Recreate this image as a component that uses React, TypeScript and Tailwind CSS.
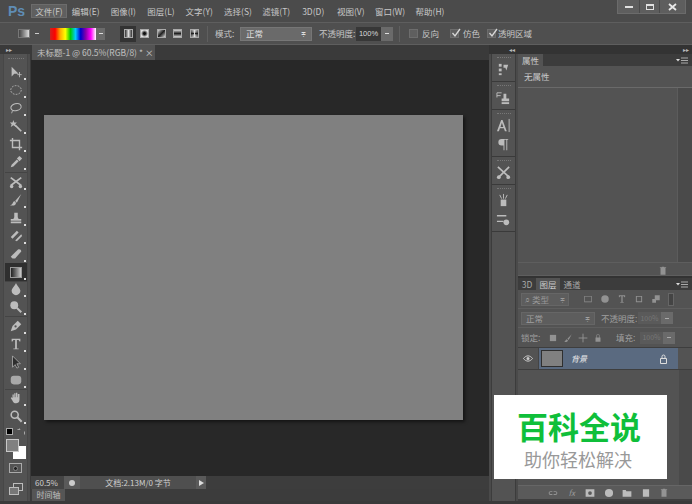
import React from "react";

type IP = { children: React.ReactNode; s?: number; className?: string };
function Ic({ children, s = 16, className = "" }: IP) {
  return (
    <svg width={s} height={s} viewBox="0 0 16 16" fill="#bcbcbc" stroke="none" className={className}>
      {children}
    </svg>
  );
}

const toolIcons: React.ReactNode[][] = [
  [
    <path key="a" d="M3 2v11l3-3h5z" />,
    <path key="b" d="M12 8v6M9.5 11h5" stroke="#bcbcbc" strokeWidth="1" />,
  ],
  [<ellipse key="a" cx="8" cy="8" rx="6" ry="5" fill="none" stroke="#bcbcbc" strokeDasharray="2 1.4" />],
  [<ellipse key="a" cx="8" cy="7" rx="6" ry="4" fill="none" stroke="#bcbcbc" strokeWidth="1.2" transform="rotate(-15 8 7)" />, <path key="b" d="M4 11l-1 3" stroke="#bcbcbc" />],
  [<path key="a" d="M7 7l7 7" stroke="#bcbcbc" strokeWidth="2" />, <path key="b" d="M5 1l1 3 3 0-2 2 1 3-3-2-3 2 1-3-2-2 3 0z" />],
  [<path key="a" d="M4 1v11h11M1 4h11v11" fill="none" stroke="#bcbcbc" strokeWidth="1.6" />],
  [<path key="a" d="M2 14l1-3 6-6 2 2-6 6z" />, <path key="b" d="M9 4l2-2 1-1 3 3-3 3z" />],
  [<path key="a" d="M2 3l12 9M14 3L2 12" stroke="#bcbcbc" strokeWidth="2" />, <circle key="b" cx="3" cy="13" r="2" />, <circle key="c" cx="13" cy="13" r="2" />],
  [<path key="a" d="M14 1L7 9l2 2z" />, <path key="b" d="M6 9c-2 1-1 4-5 5 4 1 7 0 7-3z" />],
  [<path key="a" d="M6 2h4v5l1 2h3v2H2V9h3l1-2z" />, <rect key="b" x="2" y="12" width="12" height="2" />],
  [<path key="a" d="M2 9l7-7 2 2-7 7z" />, <path key="b" d="M7 13l7-7 1 2-6 6z" />],
  [<path key="a" d="M2 11l8-8c2-1 4 0 4 2l-7 8H4z" />],
  [],
  [<path key="a" d="M8 1c1 3 5 6 5 9a5 5 0 0 1-10 0c0-3 4-6 5-9z" />],
  [<circle key="a" cx="6" cy="6" r="4.5" />, <path key="b" d="M9 9l5 5" stroke="#bcbcbc" strokeWidth="2.4" />],
  [<path key="a" d="M2 14l2-6 6-6 4 4-6 6z" />, <circle key="b" cx="7.5" cy="8.5" r="1.3" fill="#555" />],
  [<path key="a" d="M3 2h10v3h-1l-1-1.5H9V13h2v1H5v-1h2V3.5H5L4 5H3z" />],
  [<path key="a" d="M4 1v13l3-3 2 4 2-1-2-4h4z" fill="#2e2e2e" stroke="#bcbcbc" strokeWidth="0.8" />],
  [<rect key="a" x="2" y="3" width="12" height="10" rx="3.5" fill="#a8a8a8" />],
  [<path key="a" d="M4 8V4h1.5v3h.5V2.5h1.5V7h.5V2h1.5v5h.5V3.5H12V10c0 3-2 4-4 4s-3-1-4-3L2 8l1-1z" />],
  [<circle key="a" cx="6.5" cy="6.5" r="4" fill="none" stroke="#bcbcbc" strokeWidth="1.8" />, <path key="b" d="M9.5 9.5l5 5" stroke="#bcbcbc" strokeWidth="2.4" />],
];

const groups = [
  { from: 0, to: 6, cls: "pb-[1px] border-b border-[#444] pt-[1px]" },
  { from: 6, to: 12, cls: "border-b border-[#444] -mb-[2px]" },
  { from: 12, to: 14, cls: "border-b border-[#444]" },
  { from: 14, to: 18, cls: "border-b border-[#444]" },
  { from: 18, to: 20, cls: "-mt-[1px]" },
];

function Tool({ icon, active }: { icon: React.ReactNode; active?: boolean }) {
  return (
    <div className={`relative w-[22px] h-[18px] flex items-center justify-center ${active ? "bg-[#2f2f2f]" : ""}`}>
      {active ? (
        <div className="w-[12px] h-[11px] bg-gradient-to-r from-[#222] to-[#ccc] border border-[#999]" />
      ) : (
        <Ic s={14}>{icon}</Ic>
      )}
      <span className="absolute right-[1px] bottom-[1px] w-[2px] h-[2px] bg-[#ddd]" />
    </div>
  );
}

function Tools() {
  return (
    <div className="w-[31px] flex flex-col border-r border-[#3a3a3a] bg-[#4d4d4d]">
      <div className="h-[9px] bg-[#3a3a3a] text-[6px] leading-[9px] text-[#bbb] pl-[6px]">▸▸</div>
      <div className="ml-[3px] w-[25px] flex flex-col items-center flex-1 bg-[#535353] border-x border-[#474747]">
        <div className="h-[8px] flex items-center"><div className="w-[16px] border-t border-dotted border-[#777]" /></div>
        {groups.map((g, i) => (
          <div key={i} className={`flex flex-col items-center ${g.cls}`}>
            {toolIcons.slice(g.from, g.to).map((ic, j) => (
              <Tool key={j} icon={ic} active={g.from + j === 11} />
            ))}
          </div>
        ))}
        <div className="h-[9px] w-full flex items-center justify-between px-[2px] mt-[2px]">
          <div className="w-[7px] h-[7px] bg-black border border-[#aaa]" />
          <Ic s={8}><path d="M1 3h5l-1-2M15 13v-6" stroke="#bcbcbc" strokeWidth="1.6" fill="none" /></Ic>
        </div>
        <div className="relative w-[20px] h-[20px] mt-[3px]">
          <div className="absolute left-[7px] top-[7px] w-[13px] h-[13px] bg-white" />
          <div className="absolute left-0 top-0 w-[13px] h-[13px] bg-[#808080] border border-[#c8c8c8]" />
        </div>
        <div className="w-[13px] h-[10px] border border-[#aaa] mt-[4px] flex items-center justify-center">
          <div className="w-[5px] h-[5px] rounded-full bg-[#222] border border-[#888]" />
        </div>
        <div className="relative w-[14px] h-[12px] mt-[10px]">
          <div className="absolute right-0 top-0 w-[10px] h-[8px] border border-[#bcbcbc]" />
          <div className="absolute left-0 bottom-0 w-[10px] h-[8px] border border-[#bcbcbc] bg-[#777]" />
        </div>
      </div>
    </div>
  );
}

const menu = [
  { t: "文件(F)", w: "w-[36px]" },
  { t: "编辑(E)", w: "w-[37.5px]" },
  { t: "图像(I)", w: "w-[37.5px]" },
  { t: "图层(L)", w: "w-[38px]" },
  { t: "文字(Y)", w: "w-[38.5px]" },
  { t: "选择(S)", w: "w-[39px]" },
  { t: "滤镜(T)", w: "w-[37.5px]" },
  { t: "3D(D)", w: "w-[36.5px]" },
  { t: "视图(V)", w: "w-[38.5px]" },
  { t: "窗口(W)", w: "w-[40px]" },
  { t: "帮助(H)", w: "w-[40px]" },
];

function MenuBar() {
  return (
    <div className="h-[22px] flex items-center bg-[#4b4b4b] relative shrink-0">
      <div className="w-[31px] pl-[8px] text-[14px] font-bold text-[#5f8db5] font-['Liberation_Sans',sans-serif]">Ps</div>
      {menu.map((m, i) => (
        <div key={m.t} className={`h-[14px] ${m.w} flex items-center justify-center text-[8.5px] whitespace-nowrap text-[#c8c8c8] ${i === 0 ? "bg-[#5f5f5f] border border-[#6c6c6c]" : ""}`}>
          {m.t}
        </div>
      ))}
      <div className="absolute right-[6px] top-0 h-[14px] w-[69px] flex bg-[#5e5e5e] border border-[#6b6b6b] border-t-0">
        <div className="w-[22px] flex items-center justify-center border-r border-[#4a4a4a]"><div className="w-[8px] h-[2px] bg-[#e0e0e0]" /></div>
        <div className="w-[20px] flex items-center justify-center border-r border-[#4a4a4a]"><div className="w-[8px] h-[6px] border border-t-2 border-[#e0e0e0]" /></div>
        <div className="flex-1 flex items-center justify-center">
          <svg width="9" height="8" viewBox="0 0 9 8"><path d="M1 1l7 6M8 1L1 7" stroke="#e8e8e8" strokeWidth="1.8" /></svg>
        </div>
      </div>
    </div>
  );
}

function Check({ on }: { on?: boolean }) {
  return (
    <div className="w-[9px] h-[9px] bg-[#5f5f5f] border border-[#6d6d6d] relative">
      {on && (
        <svg width="11" height="10" viewBox="0 0 11 10" className="absolute left-0 -top-[2px]">
          <path d="M1.5 5l2.5 3 5-7" stroke="#d8d8d8" strokeWidth="1.3" fill="none" />
        </svg>
      )}
    </div>
  );
}

function Sep() {
  return <div className="w-px h-[16px] bg-[#3f3f3f] border-r border-[#5f5f5f]" />;
}

function GradStyle({ kind, active }: { kind: string; active?: boolean }) {
  const inner: Record<string, string> = {
    a: "bg-gradient-to-r from-[#333] via-[#ddd] to-[#333]",
    b: "bg-[radial-gradient(circle,#111_20%,#ddd_70%)]",
    c: "bg-gradient-to-br from-[#ddd] via-[#222] to-[#ddd]",
    d: "bg-gradient-to-b from-[#ddd] via-[#222] to-[#ddd]",
    e: "bg-[conic-gradient(#ddd,#222,#ddd,#222,#ddd)]",
  };
  return (
    <div className={`w-[16px] h-[16px] flex items-center justify-center ${active ? "bg-[#333]" : ""}`}>
      <div className={`w-[9px] h-[9px] border border-[#aaa] ${inner[kind]}`} />
    </div>
  );
}

function OptionsBar() {
  return (
    <div className="h-[23px] shrink-0 flex items-center bg-[#4f4f4f] border-y border-[#5e5e5e] text-[8.5px] text-[#c8c8c8] whitespace-nowrap">
      <div className="ml-[18px] w-[12px] h-[9px] bg-gradient-to-r from-[#444] to-[#ddd] border border-[#777]" />
      <div className="ml-[5px] w-[4px] h-[1px] bg-[#ccc]" />
      <div className="ml-[11px] w-[46px] h-[12px] bg-[linear-gradient(90deg,#c22,#f00,#fa0,#ff0,#0c0,#0cf,#00c,#80a,#f0f,#fff)]" />
      <div className="w-[9px] h-[12px] bg-[#6a6a6a] flex items-center justify-center"><div className="w-[4px] h-[1px] bg-[#ddd]" /></div>
      <div className="ml-[15px] flex gap-[0.5px]">
        <GradStyle kind="a" active />
        <GradStyle kind="b" />
        <GradStyle kind="c" />
        <GradStyle kind="d" />
        <GradStyle kind="e" />
      </div>
      <div className="ml-[5px]"><Sep /></div>
      <span className="ml-[7px] w-[25px]">模式:</span>
      <div className="w-[72px] h-[14px] bg-[#6a6a6a] border border-[#767676] flex items-center justify-between px-[5px] text-[#e0e0e0]">
        <span>正常</span><span className="text-[6px]">≑</span>
      </div>
      <span className="ml-[7px] w-[37px]">不透明度:</span>
      <div className="w-[25px] h-[14px] bg-[#373737] flex items-center justify-center text-[7.5px] text-[#d8d8d8] font-['Liberation_Sans',sans-serif]">100%</div>
      <div className="w-[12px] h-[14px] bg-[#6a6a6a] flex items-center justify-center"><div className="w-[4px] h-[1px] bg-[#ddd]" /></div>
      <div className="ml-[6px]"><Sep /></div>
      <div className="ml-[9px]"><Check /></div>
      <span className="ml-[4px] w-[28px] text-[8.5px]">反向</span>
      <Check on />
      <span className="ml-[2px] w-[25px] pl-[2px]">仿色</span>
      <div className="ml-[1px]"><Check on /></div>
      <span className="ml-[2px]">透明区域</span>
    </div>
  );
}

function Center() {
  return (
    <div className="flex-1 flex flex-col min-w-0">
      <div className="h-[15px] flex bg-[#3a3a3a] shrink-0">
        <div className="ml-[1px] w-[123px] h-full bg-[#535353] flex items-center pl-[5px] text-[8.5px] text-[#c0c0c0] whitespace-nowrap">
          未标题-1 @ 60.5%(RGB/8) *<span className="ml-[2px]">×</span>
        </div>
      </div>
      <div className="flex-1 bg-[#282828] pl-[13px] pt-[55px] min-h-0">
        <div className="w-[419px] h-[305px] bg-[#808080] shadow-[2px_2px_3px_rgba(0,0,0,0.5)]" />
      </div>
      <div className="h-[13px] shrink-0 flex items-center bg-[#3d3d3d] text-[8px] text-[#cfcfcf]">
        <div className="w-[33px] h-full flex items-center pl-[4px] bg-[#444]">60.5%</div>
        <div className="w-[16px] h-full bg-[#5a5a5a] flex items-center justify-center"><div className="w-[6px] h-[6px] rounded-full bg-[#ccc]" /></div>
        <div className="w-[116px] h-full bg-[#4f4f4f] flex items-center justify-center whitespace-nowrap">文档:2.13M/0 字节</div>
        <div className="w-[10px] h-full bg-[#5a5a5a] flex items-center justify-center">
          <div className="w-0 h-0 border-y-[3px] border-y-transparent border-l-[5px] border-l-[#ddd]" />
        </div>
      </div>
      <div className="h-[12px] shrink-0 flex bg-[#3c3c3c]">
        <div className="ml-[1px] w-[33px] h-full bg-[#555] flex items-center justify-center text-[8px] text-[#c0c0c0]">时间轴</div>
      </div>
    </div>
  );
}

function Dock() {
  const grp: React.ReactNode[][] = [
    [<g key="a"><rect x="3" y="2" width="3" height="3" /><rect x="3" y="7" width="3" height="3" /><rect x="3" y="12" width="3" height="2" /><path d="M8 3h5l-2 6-1-3H8z" /></g>],
    [<g key="a"><path d="M1 3h5M1 6h4M1 3v5" stroke="#bcbcbc" fill="none" /><path d="M8 4h3v5h3v3H6V9h2z" /><rect x="6" y="13" width="8" height="2" /></g>],
    [
      <g key="a"><path d="M1 14L5.5 2h1.5L11.5 14H9.5L8.4 11H4.2L3.1 14zM4.8 9.5h3L6.3 5z" /><rect x="13.5" y="1" width="1" height="14" /></g>,
      <g key="b"><path d="M6 2h7v1h-1v11h-1V3H9v11H8V9H6a3.5 3.5 0 0 1 0-7z" /></g>,
    ],
    [<g key="a"><path d="M2 2l12 11M14 2L3 13" stroke="#bcbcbc" strokeWidth="1.8" /><circle cx="3" cy="13" r="2" /><circle cx="13" cy="13" r="2" /></g>],
    [
      <g key="a"><path d="M5 7h6v7H5z" /><path d="M6 6L4 2M8 6V1M10 6l2-4" stroke="#bcbcbc" /></g>,
      <g key="b"><path d="M1 4h10M1 10h7" stroke="#bcbcbc" strokeWidth="1.5" /><circle cx="11" cy="11" r="3" /></g>,
    ],
  ];
  return (
    <div className="w-[29px] flex flex-col shrink-0 bg-[#4a4a4a]">
      <div className="h-[9px] bg-[#333] text-[6px] leading-[9px] text-right pr-[3px] text-[#bbb]">◂◂</div>
      <div className="ml-[2px] w-[25px] flex-1 flex flex-col border-x border-[#3c3c3c] bg-[#535353]">
        {grp.map((g, i) => (
          <div key={i} className="flex flex-col items-center border-b border-[#3a3a3a] pt-[3px] pb-[4px] gap-[4px]">
            <div className="w-[14px] border-t border-dotted border-[#777]" />
            {g.map((ic, j) => (
              <Ic key={j} s={15}>{ic}</Ic>
            ))}
          </div>
        ))}
      </div>
    </div>
  );
}

function Dash() {
  return <div className="w-[12px] h-[12px] bg-[#6a6a6a] flex items-center justify-center"><div className="w-[4px] h-[1px] bg-[#aaa]" /></div>;
}

function Small({ children }: { children: React.ReactNode }) {
  return <Ic s={10} className="opacity-60">{children}</Ic>;
}

function MenuIcon() {
  return (
    <svg width="12" height="7" viewBox="0 0 12 7" className="mr-[2px]">
      <path d="M0 2h4L2 4.5z" fill="#ddd" /><path d="M5 1h7M5 3.5h7M5 6h7" stroke="#aaa" />
    </svg>
  );
}

function Cell({ children }: { children: React.ReactNode }) {
  return <div className="w-[18.5px] flex items-center justify-center">{children}</div>;
}

function Panels() {
  return (
    <div className="w-[174px] flex flex-col shrink-0 text-[8.5px] text-[#c8c8c8] bg-[#3f3f3f] whitespace-nowrap">
      <div className="h-[9px] bg-[#333] text-[6px] leading-[9px] text-right pr-[3px] text-[#bbb]">▸▸</div>
      <div className="h-[12px] flex items-stretch justify-between bg-[#3c3c3c] pr-[2px]">
        <div className="w-[25px] bg-[#535353] flex items-center justify-center">属性</div>
        <div className="flex items-center"><MenuIcon /></div>
      </div>
      <div className="h-[22px] bg-[#535353] border-b border-[#6a6a6a] flex items-center pl-[6px]">无属性</div>
      <div className="h-[174px] flex">
        <div className="w-[160px] bg-[#535353] border-r border-[#5c5c5c]" />
        <div className="flex-1 bg-[#4a4a4a]" />
      </div>
      <div className="h-[14px] bg-[#535353] border-y border-[#5e5e5e] flex items-center justify-end pr-[24px] pt-[3px]">
        <Small><path d="M4 3h8v11H4zM3 2h10v1H3zM6 1h4v1H6z" /></Small>
      </div>
      <div className="h-[2px] bg-[#333]" />
      <div className="h-[12px] flex items-stretch justify-between bg-[#3c3c3c] pr-[2px]">
        <div className="flex">
          <div className="w-[18px] flex items-center justify-center text-[#a8a8a8]">3D</div>
          <div className="w-[24px] bg-[#535353] flex items-center justify-center">图层</div>
          <div className="w-[24px] flex items-center justify-center text-[#a8a8a8]">通道</div>
        </div>
        <div className="flex items-center"><MenuIcon /></div>
      </div>
      <div className="flex-1 flex flex-col bg-[#535353] min-h-0">
        <div className="h-[19px] flex items-center border-b border-[#5e5e5e] pl-[3px] text-[#999]">
          <div className="w-[48px] h-[13px] bg-[#5d5d5d] border border-[#666] flex items-center justify-between px-[3px]">
            <span>⌕ 类型</span><span className="text-[6px]">≑</span>
          </div>
          <div className="flex ml-[14px] gap-[7px] items-center">
            <Small><path d="M2 3h12v10H2zM3 4v8h10V4z" /></Small>
            <Small><circle cx="8" cy="8" r="6" /></Small>
            <Small><path d="M3 2h10v3h-1l-1-1.5H9V13h2v1H5v-1h2V3.5H5L4 5H3z" /></Small>
            <Small><path d="M3 3h10v10H3zM4.5 4.5v7h7v-7z" /></Small>
            <Small><path d="M6 2h8v8H6zM2 8h6v6H2z" /></Small>
          </div>
          <div className="ml-[7px] w-[6px] h-[13px] bg-[#444] border border-[#666]" />
        </div>
        <div className="h-[19px] flex items-center border-b border-[#5e5e5e] pl-[3px] text-[#a0a0a0]">
          <div className="w-[74px] h-[13px] bg-[#5d5d5d] border border-[#666] flex items-center justify-between px-[4px]">
            <span>正常</span><span className="text-[6px]">≑</span>
          </div>
          <span className="ml-[6px] w-[37px]">不透明度:</span>
          <div className="w-[23px] h-[12px] bg-[#5a5a5a] text-[7px] text-[#777] flex items-center justify-center">100%</div>
          <Dash />
        </div>
        <div className="h-[20px] flex items-center border-b border-[#3e3e3e] pl-[3px] text-[#a0a0a0]">
          <span className="w-[27px]">锁定:</span>
          <div className="flex gap-[5px] items-center">
            <Small><path d="M3 3h10v10H3z" /></Small>
            <Small><path d="M14 2L7 9l2 2zM6 10c-2 1-2 3-4 4 3 1 6 0 6-2z" /></Small>
            <Small><path d="M8 1v14M1 8h14" stroke="#bcbcbc" strokeWidth="1.5" /></Small>
            <Small><path d="M4 7h8v7H4zM5.5 7V4a2.5 2.5 0 0 1 5 0v3h-1V4a1.5 1.5 0 0 0-3 0v3z" /></Small>
          </div>
          <span className="ml-[13px] w-[24px]">填充:</span>
          <div className="w-[23px] h-[12px] bg-[#5a5a5a] text-[7px] text-[#777] flex items-center justify-center">100%</div>
          <Dash />
        </div>
        <div className="h-[22px] flex items-center border-b border-[#3e3e3e]">
          <div className="w-[21px] h-full flex items-center justify-center border-r border-[#444]">
            <svg width="10" height="7" viewBox="0 0 10 7"><path d="M0.5 3.5C3 0 7 0 9.5 3.5 7 7 3 7 0.5 3.5z" fill="none" stroke="#ccc" /><circle cx="5" cy="3.5" r="1.5" fill="#ccc" /></svg>
          </div>
          <div className="w-[139px] h-full bg-[#5a6a80] flex items-center pl-[2px]">
            <div className="w-[22px] h-[17px] bg-[#808080] border border-[#2f2f2f]" />
            <span className="ml-[8px] italic text-[8px] text-[#eee]">背景</span>
            <svg width="9" height="10" viewBox="0 0 9 10" className="ml-[72px]"><path d="M1.5 4.5h6v5h-6zM3 4.5V2.5a1.5 1.5 0 0 1 3 0v2" fill="none" stroke="#ddd" /></svg>
          </div>
        </div>
        <div className="flex-1 flex">
          <div className="w-[161px]" />
          <div className="flex-1 bg-[#4a4a4a]" />
        </div>
        <div className="h-[14px] shrink-0 bg-[#5a5a5a] border-t border-[#666] flex items-center pl-[26px]">
          <Cell><Small><path d="M1 8a3 3 0 0 1 3-3h3v1.5H4a1.5 1.5 0 0 0 0 3h3V11H4a3 3 0 0 1-3-3zM9 5h3a3 3 0 0 1 0 6H9V9.5h3a1.5 1.5 0 0 0 0-3H9z" /></Small></Cell>
          <Cell><span className="italic text-[8px] text-[#999]">fx</span></Cell>
          <Cell><Ic s={10}><path fillRule="evenodd" d="M1 2h14v12H1zM8 5a3 3 0 1 0 0 6 3 3 0 0 0 0-6z" /></Ic></Cell>
          <Cell><Ic s={10}><circle cx="8" cy="8" r="6.5" /></Ic></Cell>
          <Cell><Ic s={10}><path d="M1 3h5l1 2h8v9H1z" /></Ic></Cell>
          <Cell><Ic s={10}><path d="M3 2h10v12H3z" /></Ic></Cell>
          <Cell><Small><path d="M4 3h8v11H4zM3 2h10v1H3zM6 1h4v1H6z" /></Small></Cell>
        </div>
      </div>
      <div className="h-[2px]" />
    </div>
  );
}

export default function App() {
  return (
    <div className="relative w-[692px] h-[504px] overflow-hidden flex flex-col bg-[#4b4b4b] font-['Noto_Sans_CJK_SC','Liberation_Sans',sans-serif]">
      <MenuBar />
      <OptionsBar />
      <div className="flex-1 flex min-h-0 border-b-[3px] border-[#3a3a3a]">
        <Tools />
        <Center />
        <Dock />
        <Panels />
      </div>
      <div className="absolute left-[494px] top-[395px] w-[173px] h-[84px] bg-white flex flex-col pl-[23px] pt-[18px] font-['Liberation_Sans','Noto_Sans_CJK_SC',sans-serif]">
        <div className="text-[31px] leading-[32px] font-bold text-[#0fbf3a] whitespace-nowrap">百科全说</div>
        <div className="text-[18px] leading-[20px] mt-[6px] ml-[7px] text-[#999] whitespace-nowrap">助你轻松解决</div>
      </div>
    </div>
  );
}
